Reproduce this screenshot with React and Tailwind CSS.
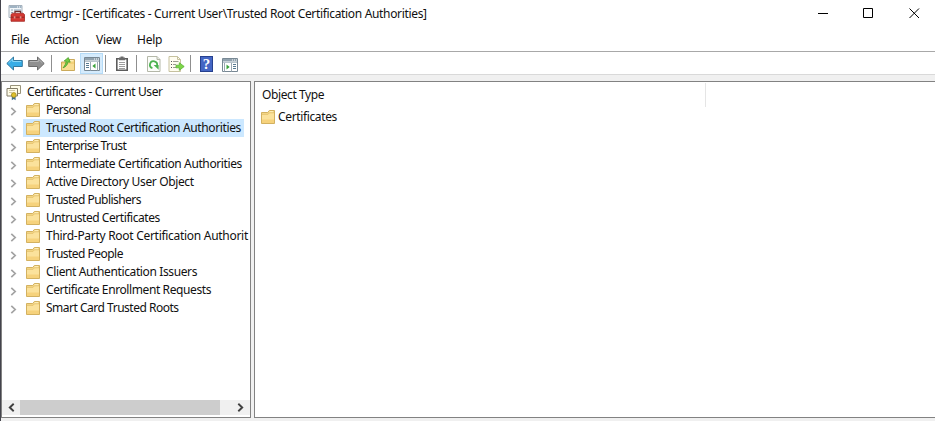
const ITEMS = [
  ['Personal', 'tracking-[-0.58px]'],
  ['Trusted Root Certification Authorities', 'tracking-[-0.37px]'],
  ['Enterprise Trust', 'tracking-[-0.6px]'],
  ['Intermediate Certification Authorities', 'tracking-[-0.39px]'],
  ['Active Directory User Object', 'tracking-[-0.36px]'],
  ['Trusted Publishers', 'tracking-[-0.54px]'],
  ['Untrusted Certificates', 'tracking-[-0.44px]'],
  ['Third-Party Root Certification Authorit', 'tracking-[-0.29px]'],
  ['Trusted People', 'tracking-[-0.53px]'],
  ['Client Authentication Issuers', 'tracking-[-0.38px]'],
  ['Certificate Enrollment Requests', 'tracking-[-0.4px]'],
  ['Smart Card Trusted Roots', 'tracking-[-0.49px]'],
];

function Folder() {
  return (
    <svg width="14" height="14" viewBox="0 0 14 14" className="block shrink-0">
      <path d="M.5 13.5V2.5h6.3L8.3.5h5.2v13z" fill="#f6d98a" stroke="#d3b160" />
      <path d="M8.8 1.3H12v1.2H8.3z" fill="#fff3c4" />
      <path d="M1 4.8h6.2l1.5-1.6H13V13H1z" fill="#fbe29c" />
      <path d="M1 9.5h12V13H1z" fill="#f6d27c" />
      <path d="M1 4.3h6l1.5-1.6H13" fill="none" stroke="#dfba65" strokeWidth=".7" />
    </svg>
  );
}

function Toolbox() {
  return (
    <svg width="17" height="17" viewBox="0 0 17 17" className="block">
      <path d="M1 .5h13v12H1z" fill="#f2f6f9" stroke="#a5b1bc" />
      <path d="M1.5 1h12v2h-12z" fill="#9fb3c3" />
      <path d="M9 2h1m1 0h1" stroke="#fff" />
      <path d="M3 5h2m1 0h7M3 7.5h2" stroke="#8fa6b8" />
      <path d="M7 8.5V6.4h5.5v2.1" fill="none" stroke="#6e302f" strokeWidth="1.3" />
      <path d="m3 9.5 1.5-1.3h10.5L16.5 9.5v6.8H3z" fill="#d33832" stroke="#a42824" strokeWidth=".8" />
      <path d="M3.2 12.2h13" stroke="#8c201f" strokeWidth=".9" />
      <path d="M5.8 11.2h1.6v2.2H5.8zm6 0h1.6v2.2h-1.6z" fill="#e08f88" />
    </svg>
  );
}

function Arrow({ right }) {
  return (
    <svg width="17" height="15" viewBox="0 0 17 15" className={right ? 'block -scale-x-100' : 'block'}>
      <path
        d="M.8 7.5 7.5 1v3.5h8.8v6H7.5V14z"
        fill={right ? '#909090' : '#38ade6'}
        stroke={right ? '#6b6b6b' : '#33799f'}
        strokeLinejoin="round"
      />
      <path d="M2.5 7 6.6 3.2v2.3h8.6" fill="none" stroke={right ? '#b5b5b5' : '#86d6f7'} />
    </svg>
  );
}

function UpFolder() {
  return (
    <svg width="16" height="16" viewBox="0 0 16 16" className="block">
      <path d="M1.5 14.5V6h5.2l1.5-2.5h6.3v11z" fill="#f2d17a" stroke="#cbaa5b" />
      <path d="M2 8h12v6H2z" fill="#f8dd92" />
      <path d="M9.5 4h4v1.5h-4z" fill="#fff0ba" />
      <path d="M3 11.8C6 10.8 7.7 8.5 7.9 5.9l2.3.3L8.3 1.6 4.2 4.9l2 .4C6 7.6 4.7 9.9 3 11.8z" fill="#74cb45" stroke="#48a02a" strokeWidth=".8" />
    </svg>
  );
}

function Console({ flip }) {
  return (
    <svg width="16" height="14" viewBox="0 0 16 14" className="block">
      <path d="M.5.5h15v13H.5z" fill="#fff" stroke="#788894" />
      <path d="M1 1h14v2.5H1z" fill="#91a2ae" />
      <path d="M10 2h1m1 0h1m1 0h1" stroke="#fff" />
      <path d="M1 4.5h14" stroke="#b9c5cd" />
      {flip ? (
        <>
          <path d="M2.5 5v8.5m7-8.5v8.5" stroke="#9aa8b2" />
          <path d="M11 6.5h3m-3 2h3m-3 2h3" stroke="#587b92" />
          <path d="M4.5 6.5v5L7.7 9z" fill="#3ca33c" />
        </>
      ) : (
        <>
          <path d="M6.5 5v8.5m7-8.5v8.5" stroke="#9aa8b2" />
          <path d="M2 6.5h3m-3 2h3m-3 2h3" stroke="#587b92" />
          <path d="M11.5 6.5v5L8.3 9z" fill="#3ca33c" />
        </>
      )}
    </svg>
  );
}

function Clipboard() {
  return (
    <svg width="14" height="16" viewBox="0 0 14 16" className="block">
      <path d="M1.8 2.8h10.4v11.4H1.8z" fill="#fff" stroke="#5c5c5c" strokeWidth="1.6" />
      <path d="M4 4.2V1.5h1.5V.5h3v1H10v2.7z" fill="#6b6b6b" />
      <path d="M4 6.5h6m-6 2h6m-6 2h6m-6 2h6" stroke="#9d9d9d" />
    </svg>
  );
}

function Refresh() {
  return (
    <svg width="14" height="16" viewBox="0 0 14 16" className="block">
      <path d="M.5.5h9.5L13 3.5v12H.5z" fill="#fbfdf9" stroke="#b4b7a8" />
      <path d="M10 .5v3h3" fill="#e8eae2" stroke="#b4b7a8" />
      <path d="M5.4 12.2A3.6 3.6 0 1 1 10.1 9.4" fill="none" stroke="#4bb250" strokeWidth="1.8" />
      <path d="M6.6 9h5v4.8z" fill="#4bb250" />
    </svg>
  );
}

function Export() {
  return (
    <svg width="17" height="16" viewBox="0 0 17 16" className="block">
      <path d="M1 .5h8.5l3 3v12H1z" fill="#fffdf0" stroke="#c6c19f" />
      <path d="M9.5.5v3h3" fill="none" stroke="#c6c19f" />
      <path d="M3 5.5h1m-1 3h1m-1 3h1" stroke="#555" />
      <path d="M5 5.5h5.5m-5.5 3h3m-3 3h3" stroke="#9c9c91" />
      <path d="M8 9.2h3.3V6.7l4.9 3.8-4.9 3.8v-2.5H8z" fill="#7ed648" stroke="#58b334" strokeWidth=".8" />
    </svg>
  );
}

function Certs() {
  return (
    <svg width="16" height="17" viewBox="0 0 16 17" className="block">
      <path d="M4.5 1.5h10v8h-10z" fill="#fffce8" stroke="#99937a" />
      <path d="M1 4.5h10.5v7.5H1z" fill="#fffce8" stroke="#837d68" />
      <path d="M3 6.5h6m-6 2h3" stroke="#cfc7a5" />
      <path d="M5.8 11.5v4.8l1.9-1.4 1.9 1.4v-4.8z" fill="#44718b" />
      <circle cx="7.8" cy="11" r="2.4" fill="#dfc12c" stroke="#a28b22" strokeWidth=".8" />
    </svg>
  );
}

function Chevron({ left, dark }) {
  return (
    <svg width="7" height="9" viewBox="0 0 7 9" className={left ? 'block -scale-x-100' : 'block'}>
      <path d="m1.3.8 3.9 3.7-3.9 3.7" fill="none" stroke={dark ? '#404040' : '#a3a3a3'} strokeWidth={dark ? 1.9 : 1.7} />
    </svg>
  );
}

function Separator({ className }) {
  return <div className={`h-[17px] w-px shrink-0 bg-[#8f8f8f] ${className}`} />;
}

export default function App() {
  return (
    <div className="flex h-[421px] w-[935px] flex-col overflow-hidden border-l border-[#44444c] bg-[#f0f0f0] font-['Noto_Sans','Open_Sans',sans-serif] text-[12px] leading-[18px] whitespace-nowrap text-[#111]">
      <header className="flex h-[28px] shrink-0 items-center bg-white pl-[7px]">
        <div className="pb-px"><Toolbox /></div>
        <h1 className="ml-[5px] tracking-[-0.335px]">certmgr - [Certificates - Current User\Trusted Root Certification Authorities]</h1>
        <svg width="104" height="12" viewBox="0 0 104 12" className="mr-[14px] mb-[2px] ml-auto block" fill="none" stroke="#000">
          <path d="M1 6.5h10" />
          <path d="M46.5 1.5h9v9h-9z" />
          <path d="m92.5 1.5 9.5 9.5m0-9.5-9.5 9.5" />
        </svg>
      </header>
      <nav className="flex h-[23px] shrink-0 items-center bg-white pl-[10px] tracking-[-0.25px]">
        <span className="w-[34px]">File</span>
        <span className="w-[51px]">Action</span>
        <span className="w-[41px]">View</span>
        <span>Help</span>
      </nav>
      <div className="flex h-[24px] shrink-0 items-center border-y border-t-[#a8a8a8] border-b-[#d9d9d9] bg-white pt-px pl-[5px]">
        <Arrow />
        <div className="ml-[5px]"><Arrow right /></div>
        <Separator className="ml-[6px]" />
        <div className="ml-2"><UpFolder /></div>
        <div className="ml-[4px] flex h-[21px] w-[23px] items-center justify-center border border-[#b5dbf7] bg-[#d5ebfc]"><Console /></div>
        <Separator className="ml-[2px]" />
        <div className="ml-[9px]"><Clipboard /></div>
        <Separator className="ml-[7px]" />
        <div className="ml-[10px]"><Refresh /></div>
        <div className="ml-[7px]"><Export /></div>
        <Separator className="ml-[5px]" />
        <div className="ml-[9px] flex h-[16px] w-[13px] items-center justify-center border border-[#26418f] bg-[#4466c4] font-['Liberation_Serif',serif] text-[15px] font-bold text-white">?</div>
        <div className="mt-[2px] ml-[9px]"><Console flip /></div>
      </div>
      <main className="mt-[6px] flex h-[337px] shrink-0">
        <aside className="flex w-[250px] flex-col overflow-hidden border border-[#828282] bg-white">
          <div className="mt-px flex h-[18px] items-center pl-[4px]">
            <Certs />
            <span className="ml-[5px] tracking-[-0.38px]">Certificates - Current User</span>
          </div>
          {ITEMS.map(([name, tracking], i) => (
            <div key={name} className="flex h-[18px] items-center pl-[8px]">
              <div className="pt-[3px]"><Chevron /></div>
              <div className={`ml-[6px] flex h-[18px] items-center pl-[3px] ${i === 1 ? 'w-[221px] bg-[#cce8ff]' : ''}`}>
                <Folder />
                <span className={`ml-[6px] ${tracking}`}>{name}</span>
              </div>
            </div>
          ))}
          <div className="mt-auto mb-[2px] flex h-[15px] items-center bg-[#f0f0f0]">
            <div className="flex w-[18px] justify-center"><Chevron left dark /></div>
            <div className="h-full w-[200px] bg-[#cdcdcd]" />
            <div className="ml-[17px]"><Chevron dark /></div>
          </div>
        </aside>
        <section className="ml-[3px] flex-1 border border-r-0 border-[#828282] bg-white">
          <div className="mt-px flex h-[24px]">
            <div className="w-[451px] border-r border-[#e5e5e5] pt-[3px] pl-[7px] tracking-[-0.4px]">Object Type</div>
          </div>
          <div className="flex h-[20px] items-center pl-[6px]">
            <Folder />
            <span className="ml-[3px] tracking-[-0.36px]">Certificates</span>
          </div>
        </section>
      </main>
    </div>
  );
}
